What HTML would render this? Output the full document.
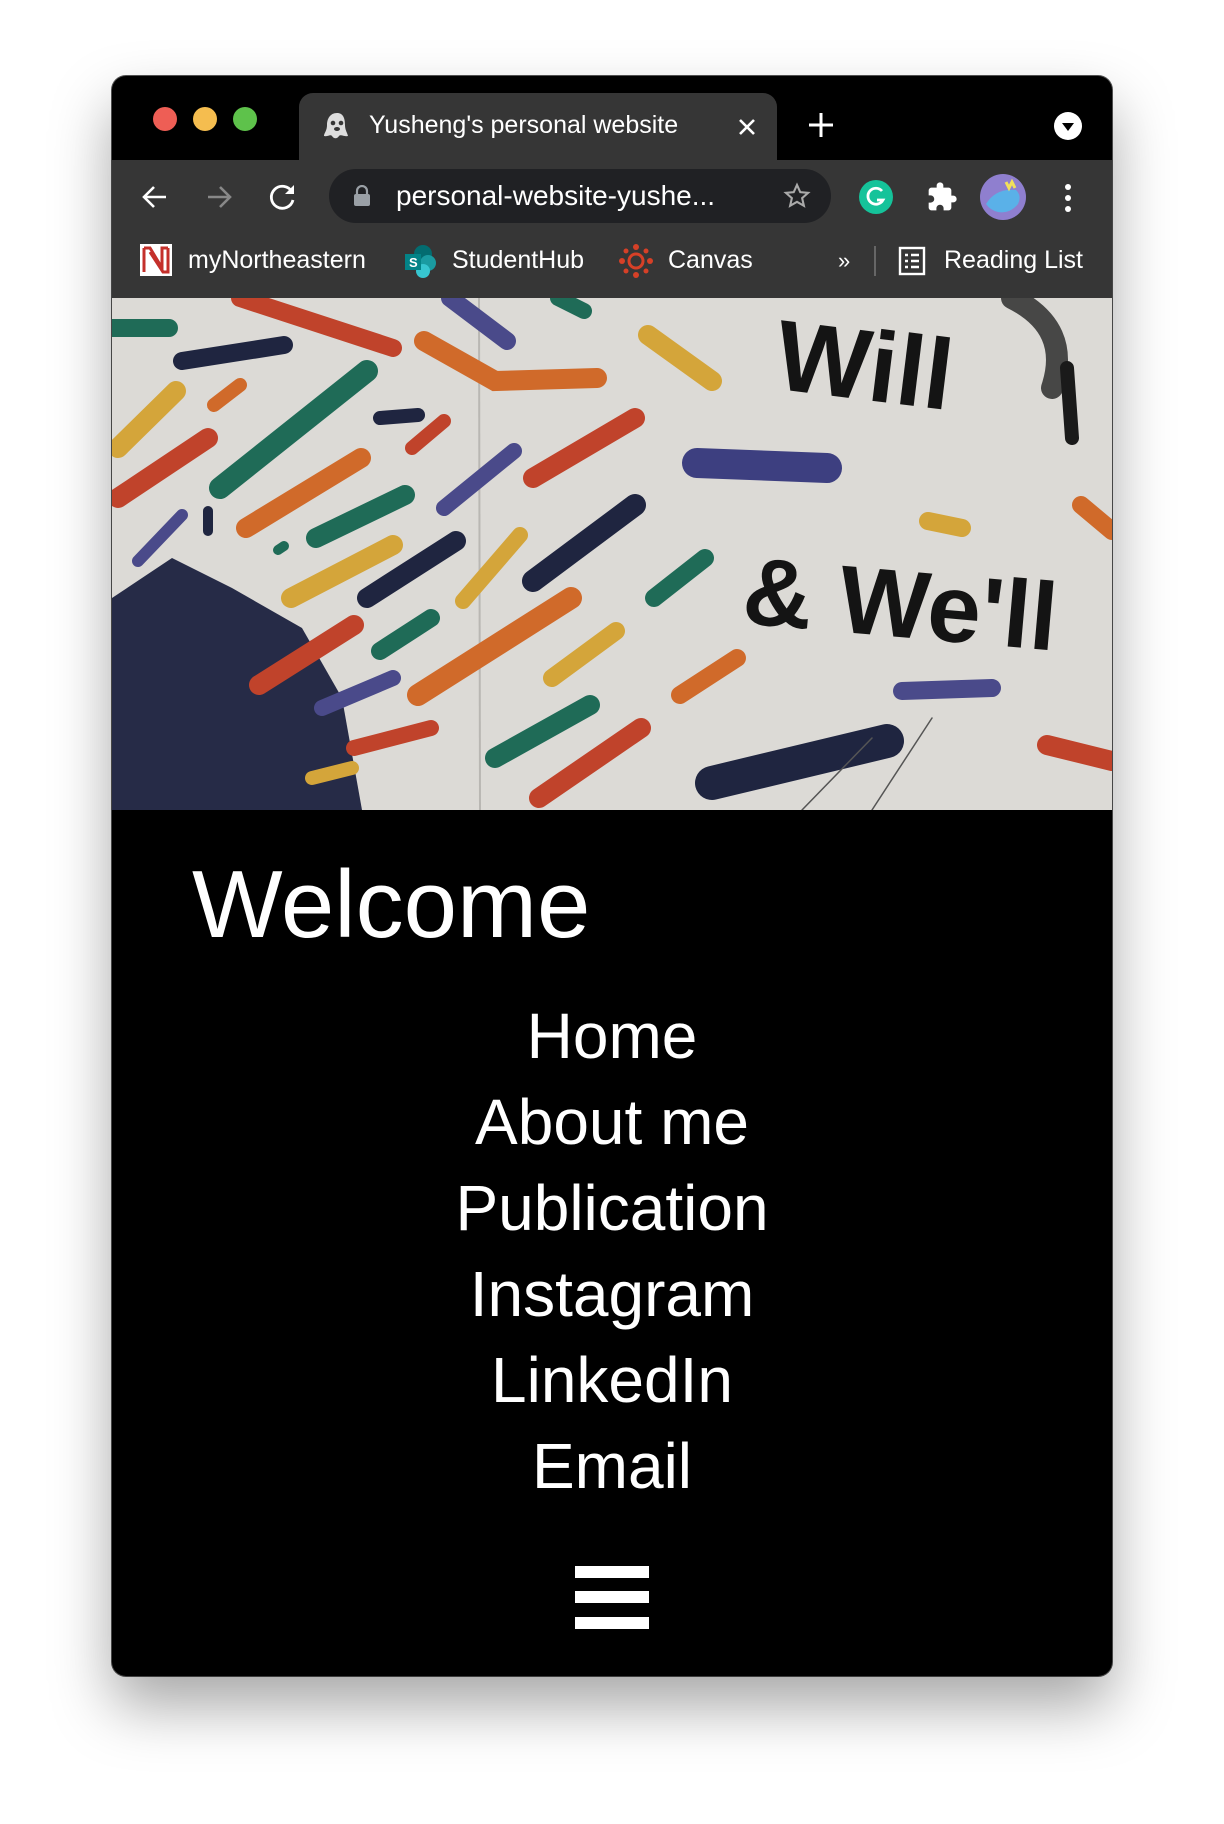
<!DOCTYPE html>
<html><head><meta charset="utf-8"><style>
*{margin:0;padding:0;box-sizing:border-box}
body{width:1224px;height:1824px;background:#fff;position:relative;overflow:hidden;font-family:"Liberation Sans",sans-serif}
.win{position:absolute;left:112px;top:76px;width:1000px;height:1600px;border-radius:14px;background:#000;overflow:hidden;box-shadow:0 30px 60px rgba(0,0,0,.35),0 0 0 1px #555}
.abs{position:absolute}
.dot{position:absolute;width:24px;height:24px;border-radius:50%;top:31px}
.tab{position:absolute;left:187px;top:17px;width:478px;height:70px;background:#363636;border-radius:14px 14px 0 0}
.toolbar{position:absolute;left:0;top:84px;width:1000px;height:138px;background:#363636}
.omni{position:absolute;left:217px;top:9px;width:502px;height:54px;border-radius:27px;background:#202124}
.t{color:#fff;position:absolute;white-space:nowrap}
.bm{font-size:25px;top:86px}
.menu{position:absolute;left:0;width:1000px;text-align:center;color:#fff;font-size:64px;line-height:86px;top:917px}
.bar{position:absolute;left:463px;width:74px;height:12px;background:#fff}
</style></head><body>
<div class="win">
  <div class="dot" style="left:41px;background:#ee5e55"></div>
  <div class="dot" style="left:81px;background:#f5bd4f"></div>
  <div class="dot" style="left:121px;background:#5ec24b"></div>
  <div class="tab">
    <svg class="abs" style="left:22px;top:17px" width="32" height="32" viewBox="0 0 32 32"><path d="M16 3c-7 0-10 6-10 12 0 6-3 8-3 11 4 1 6-2 8 0 2 3 5 3 7 0 2-2 5 1 9 0-1-4-3-6-3-11 0-7-2-12-8-12z" fill="#ddd"/><circle cx="12" cy="13" r="2.3" fill="#363636"/><circle cx="20" cy="13" r="2.3" fill="#363636"/><ellipse cx="16" cy="19" rx="3" ry="2" fill="#363636"/></svg>
    <div class="t" style="left:70px;top:18px;font-size:25px">Yusheng's personal website</div>
    <svg class="abs" style="left:438px;top:24px" width="20" height="20" viewBox="0 0 20 20" stroke="#fff" stroke-width="2.6"><path d="M3 3l14 14M17 3L3 17"/></svg>
  </div>
  <svg class="abs" style="left:696px;top:36px" width="26" height="26" viewBox="0 0 26 26" stroke="#fff" stroke-width="3"><path d="M13 1v24M1 13h24"/></svg>
  <svg class="abs" style="left:942px;top:36px" width="28" height="28"><circle cx="14" cy="14" r="14" fill="#fff"/><path d="M8 11h12l-6 8z" fill="#000"/></svg>
  <div class="toolbar">
    <svg class="abs" style="left:28px;top:22px" width="30" height="30" viewBox="0 0 30 30" fill="none" stroke="#fff" stroke-width="2.6"><path d="M26 15H5M14 5L4 15l10 10"/></svg>
    <svg class="abs" style="left:92px;top:22px" width="30" height="30" viewBox="0 0 30 30" fill="none" stroke="#888" stroke-width="2.6"><path d="M4 15h21M16 5l10 10-10 10"/></svg>
    <svg class="abs" style="left:156px;top:22px" width="30" height="30" viewBox="0 0 30 30" fill="none" stroke="#fff" stroke-width="2.8"><path d="M24 10A11 11 0 1 0 25 18"/><path d="M26 3v9h-9z" fill="#fff" stroke="none"/></svg>
    <div class="omni">
      <svg class="abs" style="left:24px;top:16px" width="18" height="22" viewBox="0 0 18 22"><path d="M4 9V6a5 5 0 0 1 10 0v3" fill="none" stroke="#9aa0a6" stroke-width="2.2"/><rect x="1" y="9" width="16" height="12" rx="2" fill="#9aa0a6"/></svg>
      <div class="t" style="left:67px;top:11px;font-size:28px">personal-website-yushe...</div>
      <svg class="abs" style="left:454px;top:13px" width="28" height="28" viewBox="0 0 24 24"><path d="M12 2.5l2.8 6.2 6.7.6-5.1 4.5 1.5 6.6L12 17l-5.9 3.4 1.5-6.6-5.1-4.5 6.7-.6z" fill="none" stroke="#aaa" stroke-width="1.8"/></svg>
    </div>
    <svg class="abs" style="left:747px;top:20px" width="34" height="34"><circle cx="17" cy="17" r="17" fill="#15c39a"/><path d="M23 11a8 8 0 1 0 1 9h-6" fill="none" stroke="#fff" stroke-width="2.8"/></svg>
    <svg class="abs" style="left:814px;top:21px" width="32" height="32" viewBox="0 0 24 24"><path d="M20.5 11H19V7a2 2 0 0 0-2-2h-4V3.5a2.5 2.5 0 0 0-5 0V5H4a2 2 0 0 0-2 2v3.8h1.5a2.7 2.7 0 0 1 0 5.4H2V20a2 2 0 0 0 2 2h3.8v-1.5a2.7 2.7 0 0 1 5.4 0V22H17a2 2 0 0 0 2-2v-4h1.5a2.5 2.5 0 0 0 0-5z" fill="#fff"/></svg>
    <svg class="abs" style="left:868px;top:14px" width="46" height="46"><circle cx="23" cy="23" r="23" fill="#8f7fcf"/><path d="M6 30q10-16 30-14 6 6 2 14-8 10-20 8-8-2-12-8z" fill="#5ab1e8"/><path d="M26 8l3 6 3-6 3 6" stroke="#f2e05a" stroke-width="3" fill="none"/></svg>
    <svg class="abs" style="left:951px;top:22px" width="10" height="32"><circle cx="5" cy="5" r="3" fill="#fff"/><circle cx="5" cy="16" r="3" fill="#fff"/><circle cx="5" cy="27" r="3" fill="#fff"/></svg>
    <svg class="abs" style="left:28px;top:84px" width="32" height="32"><rect width="32" height="32" fill="#fff"/><path d="M4 4h6l12 20V4h6M4 4v24M28 4v24h-5L10 8" fill="none" stroke="#c4302b" stroke-width="3"/></svg>
    <div class="t bm" style="left:76px">myNortheastern</div>
    <svg class="abs" style="left:291px;top:84px" width="34" height="34"><circle cx="20" cy="10" r="9" fill="#036c70"/><circle cx="25" cy="19" r="8" fill="#1a9ba1"/><circle cx="20" cy="27" r="7" fill="#37c6d0"/><rect x="2" y="10" width="16" height="16" fill="#038387"/><text x="6" y="23" font-size="13" fill="#fff" font-family="Liberation Sans" font-weight="bold">S</text></svg>
    <div class="t bm" style="left:340px">StudentHub</div>
    <svg class="abs" style="left:507px;top:84px" width="34" height="34" viewBox="0 0 34 34" fill="#d64027"><circle cx="17" cy="3" r="3"/><circle cx="17" cy="31" r="3"/><circle cx="3" cy="17" r="3"/><circle cx="31" cy="17" r="3"/><circle cx="7" cy="7" r="2.5"/><circle cx="27" cy="7" r="2.5"/><circle cx="7" cy="27" r="2.5"/><circle cx="27" cy="27" r="2.5"/><circle cx="17" cy="17" r="7" fill="none" stroke="#d64027" stroke-width="3"/></svg>
    <div class="t bm" style="left:556px">Canvas</div>
    <div class="t bm" style="left:726px;font-size:22px;top:88px">»</div>
    <div class="abs" style="left:762px;top:86px;width:2px;height:30px;background:#666"></div>
    <svg class="abs" style="left:785px;top:86px" width="30" height="30" viewBox="0 0 30 30" fill="none" stroke="#fff" stroke-width="2.4"><rect x="3" y="2" width="24" height="26"/><path d="M8 9h3M14 9h8M8 15h3M14 15h8M8 21h3M14 21h8"/></svg>
    <div class="t bm" style="left:832px">Reading List</div>
  </div>
  <svg class="abs" style="left:0;top:222px" width="1000" height="512" viewBox="0 0 1000 512">
    <rect width="1000" height="512" fill="#dcdad6"/>
    <line x1="367" y1="0" x2="368" y2="512" stroke="#b9b7b3" stroke-width="2"/>
    <g stroke-linecap="round" fill="none">
      <path d="M0 300L60 260 120 290 190 330 230 400 250 512H0z" fill="#262b47" stroke="none"/>
      <line x1="128" y1="0" x2="281" y2="50" stroke="#c0432b" stroke-width="18"/>
      <line x1="0" y1="30" x2="57" y2="30" stroke="#1f6b57" stroke-width="18"/>
      <line x1="70" y1="63" x2="172" y2="47" stroke="#1f2540" stroke-width="18"/>
      <line x1="338" y1="0" x2="395" y2="43" stroke="#4a4a8a" stroke-width="18"/>
      <line x1="446" y1="0" x2="472" y2="13" stroke="#1f6b57" stroke-width="16"/>
      <polyline points="312,43 383,83 485,80" stroke="#d06a2a" stroke-width="20"/>
      <line x1="536" y1="37" x2="600" y2="83" stroke="#d4a53a" stroke-width="20"/>
      <line x1="255" y1="73" x2="108" y2="190" stroke="#1f6b57" stroke-width="22"/>
      <line x1="128" y1="87" x2="102" y2="107" stroke="#d06a2a" stroke-width="14"/>
      <line x1="64" y1="93" x2="6" y2="150" stroke="#d4a53a" stroke-width="20"/>
      <line x1="268" y1="120" x2="306" y2="117" stroke="#1f2540" stroke-width="14"/>
      <line x1="332" y1="123" x2="300" y2="150" stroke="#c0432b" stroke-width="14"/>
      <line x1="523" y1="120" x2="421" y2="180" stroke="#c0432b" stroke-width="20"/>
      <line x1="96" y1="140" x2="6" y2="200" stroke="#c0432b" stroke-width="20"/>
      <line x1="249" y1="160" x2="134" y2="230" stroke="#d06a2a" stroke-width="20"/>
      <line x1="402" y1="153" x2="332" y2="210" stroke="#4a4a8a" stroke-width="16"/>
      <line x1="585" y1="165" x2="715" y2="170" stroke="#3d3f80" stroke-width="30"/>
      <line x1="293" y1="197" x2="204" y2="240" stroke="#1f6b57" stroke-width="20"/>
      <line x1="96" y1="213" x2="96" y2="233" stroke="#1f2540" stroke-width="10"/>
      <line x1="70" y1="217" x2="26" y2="263" stroke="#4a4a8a" stroke-width="12"/>
      <line x1="523" y1="207" x2="421" y2="283" stroke="#1f2540" stroke-width="22"/>
      <line x1="816" y1="223" x2="850" y2="230" stroke="#d4a53a" stroke-width="18"/>
      <line x1="969" y1="207" x2="1000" y2="233" stroke="#d06a2a" stroke-width="18"/>
      <line x1="281" y1="247" x2="179" y2="300" stroke="#d4a53a" stroke-width="20"/>
      <line x1="344" y1="243" x2="255" y2="300" stroke="#1f2540" stroke-width="20"/>
      <line x1="408" y1="237" x2="351" y2="303" stroke="#d4a53a" stroke-width="16"/>
      <line x1="593" y1="260" x2="542" y2="300" stroke="#1f6b57" stroke-width="18"/>
      <line x1="172" y1="248" x2="166" y2="252" stroke="#1f6b57" stroke-width="10"/>
      <line x1="459" y1="300" x2="306" y2="397" stroke="#d06a2a" stroke-width="22"/>
      <line x1="504" y1="333" x2="440" y2="380" stroke="#d4a53a" stroke-width="18"/>
      <line x1="319" y1="320" x2="268" y2="353" stroke="#1f6b57" stroke-width="18"/>
      <line x1="242" y1="327" x2="147" y2="387" stroke="#c0432b" stroke-width="20"/>
      <line x1="625" y1="360" x2="568" y2="397" stroke="#d06a2a" stroke-width="18"/>
      <line x1="790" y1="393" x2="880" y2="390" stroke="#4a4a8a" stroke-width="18"/>
      <line x1="281" y1="380" x2="210" y2="410" stroke="#4a4a8a" stroke-width="16"/>
      <line x1="478" y1="407" x2="383" y2="460" stroke="#1f6b57" stroke-width="20"/>
      <line x1="529" y1="430" x2="427" y2="500" stroke="#c0432b" stroke-width="20"/>
      <line x1="775" y1="443" x2="600" y2="485" stroke="#1f2540" stroke-width="34"/>
      <line x1="935" y1="447" x2="1000" y2="463" stroke="#c0432b" stroke-width="20"/>
      <line x1="319" y1="430" x2="242" y2="450" stroke="#c0432b" stroke-width="16"/>
      <line x1="200" y1="480" x2="240" y2="470" stroke="#d4a53a" stroke-width="14"/>
      <path d="M690 512L760 440M760 512L820 420" stroke="#555" stroke-width="1.5"/>
      <path d="M900 0q60 30 40 90" stroke="#222" stroke-width="22" opacity=".8"/>
      <line x1="955" y1="70" x2="960" y2="140" stroke="#1a1a1a" stroke-width="14"/>
    </g>
    <text x="665" y="100" transform="rotate(7 740 60)" font-family="Liberation Sans" font-weight="bold" font-size="100" fill="#141414">Will</text>
    <text x="630" y="340" transform="rotate(5 800 320)" font-family="Liberation Sans" font-weight="bold" font-size="96" fill="#141414">&amp; We'll</text>
  </svg>
  <div class="t" style="left:80px;top:774px;font-size:96px;line-height:110px">Welcome</div>
  <div class="menu">Home<br>About me<br>Publication<br>Instagram<br>LinkedIn<br>Email</div>
  <div class="bar" style="top:1490px"></div>
  <div class="bar" style="top:1515px"></div>
  <div class="bar" style="top:1541px"></div>
</div>
</body></html>
